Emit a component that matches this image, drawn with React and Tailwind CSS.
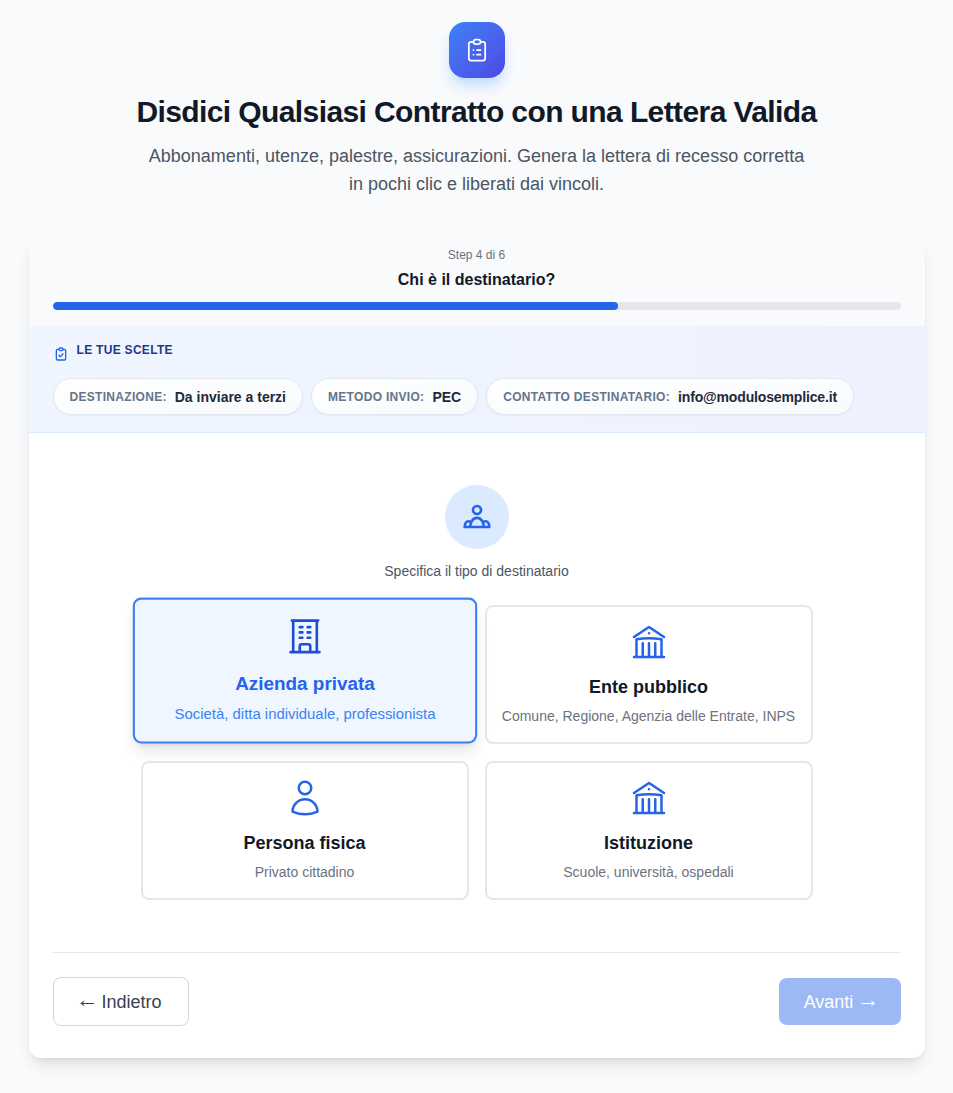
import React from 'react';

const Outline = ({ d, className, sw = 2 }) => (
  <svg className={className} fill="none" viewBox="0 0 24 24" stroke="currentColor" strokeWidth={sw} strokeLinecap="round" strokeLinejoin="round">
    <path d={d} />
  </svg>
);

const ICONS = {
  list: 'M9 5H7a2 2 0 00-2 2v12a2 2 0 002 2h10a2 2 0 002-2V7a2 2 0 00-2-2h-2M9 5a2 2 0 002 2h2a2 2 0 002-2M9 5a2 2 0 012-2h2a2 2 0 012 2m-3 7h3m-3 4h3m-6-4h.01M9 16h.01',
  check: 'M9 5H7a2 2 0 00-2 2v12a2 2 0 002 2h10a2 2 0 002-2V7a2 2 0 00-2-2h-2M9 5a2 2 0 002 2h2a2 2 0 002-2M9 5a2 2 0 012-2h2a2 2 0 012 2m-6 9l2 2 4-4',
  office: 'M3.75 21h16.5M4.5 3h15M5.25 3v18m13.5-18v18M9 6.75h1.5m-1.5 3h1.5m-1.5 3h1.5m3-6H15m-1.5 3H15m-1.5 3H15M9 21v-3.375c0-.621.504-1.125 1.125-1.125h3.75c.621 0 1.125.504 1.125 1.125V21',
  library: 'M12 21v-8.25M15.75 21v-8.25M8.25 21v-8.25M3 9l9-6 9 6m-1.5 12V10.332A48.36 48.36 0 0012 9.75c-2.551 0-5.056.2-7.5.582V21M3 21h18M12 6.75h.008v.008H12V6.75z',
  user: 'M15.75 6a3.75 3.75 0 11-7.5 0 3.75 3.75 0 017.5 0zM4.501 20.118a7.5 7.5 0 0114.998 0A17.933 17.933 0 0112 21.75c-2.676 0-5.216-.584-7.499-1.632z',
  group: 'M15 6.75a3 3 0 11-6 0 3 3 0 016 0zM2.75 19.5h18.5M6.9 19.5c0-3.8 2.2-6.8 5.1-6.8s5.1 3 5.1 6.8M2.75 19.5c0-2.5 1.1-4.3 2.9-4.3.7 0 1.3.2 1.9.7M21.25 19.5c0-2.5-1.1-4.3-2.9-4.3-.7 0-1.3.2-1.9.7',
};

const chips = [
  ['Destinazione:', 'Da inviare a terzi', ''],
  ['Metodo invio:', 'PEC', ''],
  ['Contatto destinatario:', 'info@modulosemplice.it', 'tracking-[-0.15px]'],
];

const options = [
  { icon: 'office', title: 'Azienda privata', sub: 'Società, ditta individuale, professionista', selected: true },
  { icon: 'library', title: 'Ente pubblico', sub: 'Comune, Regione, Agenzia delle Entrate, INPS' },
  { icon: 'user', title: 'Persona fisica', sub: 'Privato cittadino' },
  { icon: 'library', title: 'Istituzione', sub: 'Scuole, università, ospedali' },
];

function OptionCard({ icon, title, sub, selected }) {
  return (
    <button
      type="button"
      className={`flex flex-col items-center rounded-lg border-2 px-2 pt-[15px] pb-4 text-center ${
        selected ? '-translate-y-1 scale-105 border-[#3b82f6] bg-[#eff6ff] shadow-lg' : 'border-[#e5e7eb] bg-white'
      }`}
    >
      <svg className={`mb-[11px] h-10 w-10 ${selected ? 'text-[#1d4ed8]' : 'text-[#2563eb]'}`} fill="none" viewBox="0 0 24 24" stroke="currentColor" strokeWidth={1.5} strokeLinecap="round" strokeLinejoin="round">
        <path d={ICONS[icon]} />
      </svg>
      <span className={`text-lg leading-7 font-semibold ${selected ? 'text-[#2563eb]' : 'text-[#111827]'}`}>{title}</span>
      <span className={`mt-[5px] leading-5 ${selected ? 'text-[14.2px] text-[#3b82f6]' : 'text-sm text-[#6b7280]'}`}>{sub}</span>
    </button>
  );
}

export default function App() {
  return (
    <div className="min-h-screen bg-[#f9fafb] px-4 pt-[22px] pb-[35px] font-['Liberation_Sans',_Arial,_sans-serif] text-[#111827]">
      <div className="mx-auto max-w-[896px]">
        <div className="mb-[39px] flex flex-col items-center text-center">
          <div className="mb-4 flex h-14 w-14 items-center justify-center rounded-2xl bg-gradient-to-br from-[#3b82f6] to-[#4f46e5] text-white shadow-lg shadow-[#bfdbfe]">
            <Outline d={ICONS.list} className="h-7 w-7" sw={1.5} />
          </div>
          <h1 className="mb-3 text-3xl leading-9 font-bold tracking-[-0.6px] text-[#111827]">Disdici Qualsiasi Contratto con una Lettera Valida</h1>
          <p className="max-w-2xl text-lg leading-7 text-[#4b5563]">
            Abbonamenti, utenze, palestre, assicurazioni. Genera la lettera di recesso corretta in pochi clic e liberati dai vincoli.
          </p>
        </div>

        <div className="overflow-hidden rounded-xl bg-white shadow-lg">
          <div className="bg-[#f9fafb] px-6 pt-[10px] pb-4">
            <p className="text-center text-xs leading-4 text-[#6b7280]">Step 4 di 6</p>
            <h2 className="mt-[7px] text-center text-base leading-5 font-semibold text-[#111827]">Chi è il destinatario?</h2>
            <div className="mt-3 h-2 w-full overflow-hidden rounded-full bg-[#e5e7eb]">
              <div className="h-full w-2/3 rounded-full bg-[#2563eb]" />
            </div>
          </div>

          <div className="border-b border-[#dbeafe] bg-gradient-to-r from-[#eff6ff] to-[#eef2ff] px-6 pt-4 pb-[17px]">
            <div className="mb-4 flex items-start gap-2">
              <Outline d={ICONS.check} className="mt-1 h-4 w-4 text-[#2563eb]" />
              <h3 className="text-xs leading-4 font-bold tracking-wide text-[#1e3a8a] uppercase">Le tue scelte</h3>
            </div>
            <div className="flex flex-wrap gap-2">
              {chips.map(([label, value, tracking]) => (
                <div key={label} className="flex h-[37px] items-center gap-2 rounded-full border border-[#e2e8f0] bg-gradient-to-br from-white to-[#f8fafc] px-4 shadow-[0_1px_2px_rgba(0,0,0,0.05)]">
                  <span className="text-xs font-semibold tracking-wide text-[#64748b] uppercase">{label}</span>
                  <span className={`text-sm font-semibold text-[#1e293b] ${tracking}`}>{value}</span>
                </div>
              ))}
            </div>
          </div>

          <div className="px-6 pt-[52px] pb-[32px]">
            <div className="flex flex-col items-center">
              <div className="mb-3 flex h-16 w-16 items-center justify-center rounded-full bg-[#dbeafe] text-[#2563eb]">
                <Outline d={ICONS.group} className="h-8 w-8" />
              </div>
              <p className="text-sm leading-5 text-[#4b5563]">Specifica il tipo di destinatario</p>
            </div>

            <div className="mx-auto mt-6 grid max-w-2xl grid-cols-2 gap-x-4 gap-y-[17px]">
              {options.map((o) => (
                <OptionCard key={o.title} {...o} />
              ))}
            </div>

            <div className="mt-[52px] flex items-center justify-between border-t border-[#e5e7eb] pt-[24px]">
              <button type="button" className="flex h-[49px] w-[136px] items-center justify-center gap-[3px] rounded-lg border border-[#d1d5db] bg-white text-lg text-[#374151]">
                <span className="-ml-1 -translate-y-[2px] text-[23px] leading-none">←</span>
                <span>Indietro</span>
              </button>
              <button type="button" className="flex h-[47px] w-[122px] items-center justify-center gap-[3px] rounded-lg bg-[#2563eb] text-lg font-medium text-white opacity-45">
                <span>Avanti</span>
                <span className="-mr-1 -translate-y-[2px] text-[23px] leading-none">→</span>
              </button>
            </div>
          </div>
        </div>
      </div>
    </div>
  );
}
